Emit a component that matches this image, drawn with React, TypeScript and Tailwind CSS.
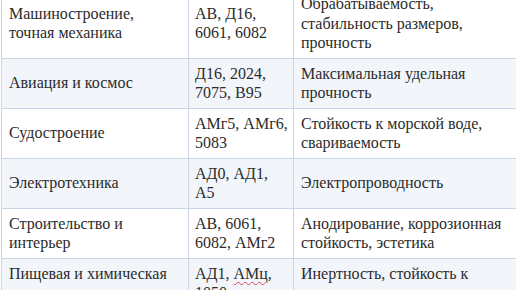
const rows = [
  {
    area: "Машиностроение, точная механика",
    alloys: "АВ, Д16, 6061, 6082",
    props: "Обрабатываемость, стабильность размеров, прочность",
  },
  {
    area: "Авиация и космос",
    alloys: "Д16, 2024, 7075, В95",
    props: "Максимальная удельная прочность",
  },
  {
    area: "Судостроение",
    alloys: "АМг5, АМг6, 5083",
    props: "Стойкость к морской воде, свариваемость",
  },
  {
    area: "Электротехника",
    alloys: "АД0, АД1, А5",
    props: "Электропроводность",
  },
  {
    area: "Строительство и интерьер",
    alloys: "АВ, 6061, 6082, АМг2",
    props: "Анодирование, коррозионная стойкость, эстетика",
  },
];

const cell = "border border-[#c9d5e3] py-[5px] align-middle";
const side = "px-[7px]";
const mid = "pl-[6px] pr-[4px]";

const App = () => {
  return (
    <div className="w-[516px] h-[290px] overflow-hidden bg-white">
      <table className="-mt-[12px] ml-[1px] w-[535px] border-collapse table-fixed font-[family-name:'Liberation_Serif','Times_New_Roman',serif] text-[16px] leading-[19.5px] text-[#2b2b2b]">
        <colgroup>
          <col className="w-[187px]" />
          <col className="w-[105px]" />
          <col className="w-[243px]" />
        </colgroup>
        <tbody>
          {rows.map((row, i) => (
            <tr key={row.area} className={i % 2 === 1 ? "bg-[#f2f6fb]" : "bg-white"}>
              <td className={`${cell} ${side}`}>{row.area}</td>
              <td className={`${cell} ${mid}`}>{row.alloys}</td>
              <td className={`${cell} ${side}`}>{row.props}</td>
            </tr>
          ))}
          <tr className="bg-[#f2f6fb]">
            <td className={`${cell} ${side}`}>Пищевая и химическая промышленность</td>
            <td className={`${cell} ${mid}`}>
              АД1,{" "}
              <span className="underline decoration-wavy decoration-[#e0425a] decoration-1 underline-offset-2">
                АМц
              </span>
              , 1050
            </td>
            <td className={`${cell} ${side}`}>Инертность, стойкость к кислотам</td>
          </tr>
        </tbody>
      </table>
    </div>
  );
};

export default App;
